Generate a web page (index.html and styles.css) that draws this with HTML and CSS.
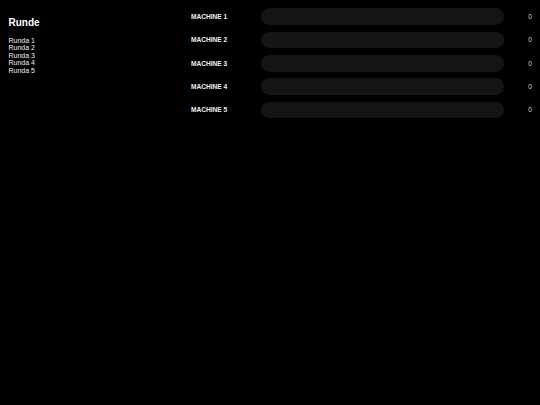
FILE: index.html
```html
<!DOCTYPE html>
<html>
<head>
<meta charset="utf-8">
<link rel="stylesheet" href="styles.css">
</head>
<body>
<div class="app">
  <aside class="sidebar">
    <h1 class="title">Runde</h1>
    <ul class="rounds">
      <li>Runda 1</li>
      <li>Runda 2</li>
      <li>Runda 3</li>
      <li>Runda 4</li>
      <li>Runda 5</li>
    </ul>
  </aside>
  <main class="machines">
    <div class="label">MACHINE 1</div><div class="bar"></div><div class="value">0</div>
    <div class="label">MACHINE 2</div><div class="bar"></div><div class="value">0</div>
    <div class="label">MACHINE 3</div><div class="bar"></div><div class="value">0</div>
    <div class="label">MACHINE 4</div><div class="bar"></div><div class="value">0</div>
    <div class="label">MACHINE 5</div><div class="bar"></div><div class="value">0</div>
  </main>
</div>
</body>
</html>
```
FILE: styles.css
```css
html, body {
  margin: 0;
  padding: 0;
  background: #000;
  color: #fff;
  font-family: "Liberation Sans", Arial, sans-serif;
}
.app {
  display: flex;
  width: 540px;
  height: 405px;
}
.sidebar {
  width: 183px;
  padding-left: 8.5px;
  box-sizing: border-box;
}
.title {
  margin: 16.7px 0 0;
  font-size: 10px;
  line-height: 12px;
  font-weight: bold;
  color: #fff;
}
.rounds {
  list-style: none;
  margin: 8.2px 0 0;
  padding: 0;
  font-size: 7px;
  line-height: 7.5px;
  color: #eee;
}
.machines {
  flex: 1;
  display: grid;
  grid-template-columns: 70px 243px 1fr;
  grid-auto-rows: 16.7px;
  row-gap: 6.65px;
  align-content: start;
  align-items: center;
  padding: 8.3px 8px 0 8px;
}
.label {
  font-size: 6.6px;
  font-weight: bold;
  color: #f0f0f0;
}
.bar {
  height: 16.7px;
  border-radius: 8.4px;
  background: #141414;
}
.value {
  text-align: right;
  font-size: 6.6px;
  color: #ddd;
}
```
